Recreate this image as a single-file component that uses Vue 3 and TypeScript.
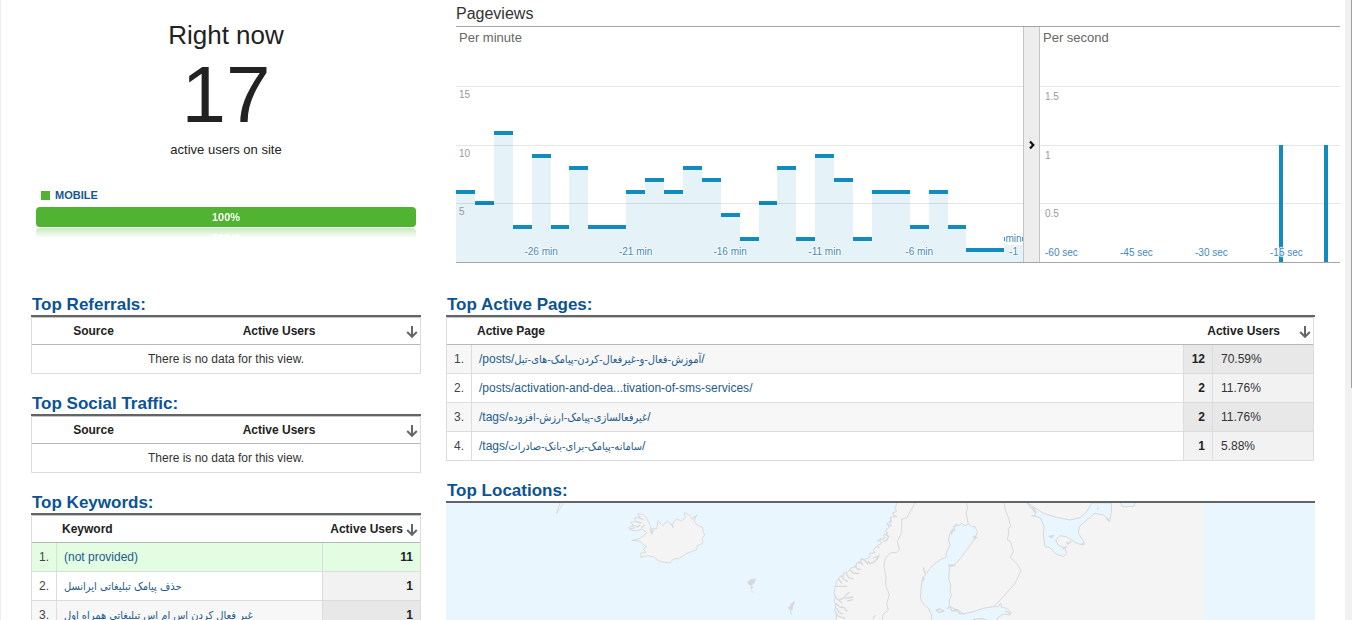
<script setup lang="ts">
interface Column {
  value: number
  label?: string
}

interface PageRow {
  prefix: string
  slug: string
  rtl: boolean
  users: number
  share: string
}

interface KeywordRow {
  text: string
  rtl: boolean
  users: number
}

const minuteValues: number[] = [
  6, 5, 11, 3, 9, 3, 8, 3, 3, 6, 7, 6, 8, 7, 4, 2, 5, 8, 2, 9, 7, 2, 6, 6, 3, 6, 3, 1, 1, 2,
]
const minuteLabels: Record<number, string> = {
  4: '-26 min',
  9: '-21 min',
  14: '-16 min',
  19: '-11 min',
  24: '-6 min',
}
const minutes: Column[] = minuteValues.map((value, i) => ({ value, label: minuteLabels[i] }))
const minuteMax = 20

const seconds: number[] = Array.from({ length: 59 }, (_, i) => (i === 47 || i === 56 ? 1 : 0))
const secondMax = 2
const secondLabels = ['-60 sec', '-45 sec', '-30 sec', '-15 sec']

const minuteTicks = ['15', '10', '5']
const secondTicks = ['1.5', '1', '0.5']

const emptyTables = ['Top Referrals:', 'Top Social Traffic:']

const keywords: KeywordRow[] = [
  { text: '(not provided)', rtl: false, users: 11 },
  { text: 'حذف پیامک تبلیغاتی ایرانسل', rtl: true, users: 1 },
  { text: 'غیر فعال کردن اس ام اس تبلیغاتی همراه اول', rtl: true, users: 1 },
]

const pages: PageRow[] = [
  { prefix: '/posts/', slug: 'آموزش-فعال-و-غیرفعال-کردن-پیامک-های-تبل', rtl: true, users: 12, share: '70.59%' },
  { prefix: '/posts/', slug: 'activation-and-dea...tivation-of-sms-services', rtl: false, users: 2, share: '11.76%' },
  { prefix: '/tags/', slug: 'غیرفعالسازی-پیامک-ارزش-افزوده', rtl: true, users: 2, share: '11.76%' },
  { prefix: '/tags/', slug: 'سامانه-پیامک-برای-بانک-صادرات', rtl: true, users: 1, share: '5.88%' },
]
</script>

<template>
  <div class="page">
    <main class="main">
      <section class="top">
        <div class="now">
          <h1 class="now-title">Right now</h1>
          <div class="now-count">17</div>
          <div class="now-caption">active users on site</div>
          <div class="legend"><span class="swatch"></span>MOBILE</div>
          <div class="share">100%</div>
        </div>

        <div class="views">
          <h2 class="views-title">Pageviews</h2>
          <div class="charts">
            <div class="chart">
              <div class="chart-name">Per minute</div>
              <div class="bars">
                <div v-for="(m, i) in minutes" :key="i" class="col">
                  <div class="step" :style="{ height: (m.value / minuteMax) * 100 + '%' }"></div>
                  <span v-if="m.label" class="col-label">{{ m.label }}</span>
                </div>
                <span class="last-label"><span class="last-unit">min</span><span>-1</span></span>
              </div>
              <div class="grid-lines">
                <div class="band"></div>
                <div v-for="t in minuteTicks" :key="t" class="band line"><span class="tick">{{ t }}</span></div>
              </div>
            </div>
            <button class="splitter" type="button" aria-label="Collapse per second chart">
              <svg width="6" height="10" viewBox="0 0 6 10">
                <path d="M1 1.5 L4.3 5 L1 8.5" fill="none" stroke="#111" stroke-width="2.2" />
              </svg>
            </button>
            <div class="chart">
              <div class="chart-name">Per second</div>
              <div class="grid-lines">
                <div class="band"></div>
                <div v-for="t in secondTicks" :key="t" class="band line"><span class="tick tick-low">{{ t }}</span></div>
              </div>
              <div class="bars">
                <div v-for="(s, i) in seconds" :key="i" class="col">
                  <div v-if="s" class="spike" :style="{ height: (s / secondMax) * 100 + '%' }"></div>
                </div>
              </div>
              <div class="sec-labels">
                <span v-for="l in secondLabels" :key="l">{{ l }}</span>
              </div>
            </div>
          </div>
        </div>
      </section>

      <section class="bottom">
        <div class="side">
          <div v-for="title in emptyTables" :key="title" class="block">
            <h2 class="block-title">{{ title }}</h2>
            <table class="data">
              <colgroup><col class="w-source" /><col /><col class="w-arrow" /></colgroup>
              <thead>
                <tr>
                  <th class="center">Source</th>
                  <th class="center">Active Users</th>
                  <th class="sort">
                    <button type="button" aria-label="Sort by active users">
                      <svg width="12" height="14" viewBox="0 0 12 14">
                        <path d="M6 1V11.5M1.2 7L6 11.8L10.8 7" fill="none" stroke="#666" stroke-width="2" />
                      </svg>
                    </button>
                  </th>
                </tr>
              </thead>
              <tbody>
                <tr><td class="empty" colspan="3">There is no data for this view.</td></tr>
              </tbody>
            </table>
          </div>

          <div class="block">
            <h2 class="block-title">Top Keywords:</h2>
            <table class="data">
              <colgroup><col class="w-index" /><col /><col class="w-users" /><col class="w-arrow" /></colgroup>
              <thead>
                <tr>
                  <th class="name" colspan="2">Keyword</th>
                  <th class="tight">Active Users</th>
                  <th class="sort">
                    <button type="button" aria-label="Sort by active users">
                      <svg width="12" height="14" viewBox="0 0 12 14">
                        <path d="M6 1V11.5M1.2 7L6 11.8L10.8 7" fill="none" stroke="#666" stroke-width="2" />
                      </svg>
                    </button>
                  </th>
                </tr>
              </thead>
              <tbody>
                <tr v-for="(k, i) in keywords" :key="i" :class="{ changed: i === 0 }">
                  <td class="index">{{ i + 1 }}.</td>
                  <td class="item"><a href="#" :class="{ fa: k.rtl }">{{ k.text }}</a></td>
                  <td class="count" colspan="2">{{ k.users }}</td>
                </tr>
              </tbody>
            </table>
          </div>
        </div>

        <div class="wide">
          <div class="block">
            <h2 class="block-title">Top Active Pages:</h2>
            <table class="data inset">
              <colgroup>
                <col class="w-index" /><col /><col class="w-count" /><col class="w-share" /><col class="w-arrow" />
              </colgroup>
              <thead>
                <tr>
                  <th class="name" colspan="2">Active Page</th>
                  <th class="right" colspan="2">Active Users</th>
                  <th class="sort">
                    <button type="button" aria-label="Sort by active users">
                      <svg width="12" height="14" viewBox="0 0 12 14">
                        <path d="M6 1V11.5M1.2 7L6 11.8L10.8 7" fill="none" stroke="#666" stroke-width="2" />
                      </svg>
                    </button>
                  </th>
                </tr>
              </thead>
              <tbody>
                <tr v-for="(p, i) in pages" :key="i">
                  <td class="index">{{ i + 1 }}.</td>
                  <td class="item">
                    <a href="#">{{ p.prefix }}<span :class="{ fa: p.rtl }">{{ p.slug }}</span>/</a>
                  </td>
                  <td class="count">{{ p.users }}</td>
                  <td class="pct" colspan="2">{{ p.share }}</td>
                </tr>
              </tbody>
            </table>
          </div>

          <div class="block">
            <h2 class="block-title">Top Locations:</h2>
            <svg class="map" viewBox="18 84 2607 600" role="img" aria-label="Map of top locations">
              <rect x="18" y="84" width="2607" height="600" fill="#e9f6fe" />
              <path
                class="land"
                d="M1371 84L1365 100L1370 110L1358 113L1365 125L1350 127L1355 140L1340 145L1348 157L1336 165L1343 175L1330 180L1335 190L1318 195L1325 205L1310 213L1300 225L1305 233L1290 235L1290 247L1275 253L1262 253L1265 265L1250 263L1248 275L1232 280L1225 290L1210 295L1212 303L1198 307L1190 320L1185 337L1182 355L1186 367L1182 380L1188 393L1184 405L1190 420L1188 435L1196 520L1230 600L1260 684H2292V84Z"
              />
              <path
                class="coast"
                d="M1371 84L1365 100L1370 110L1358 113L1365 125L1350 127L1355 140L1340 145L1348 157L1336 165L1343 175L1330 180L1335 190L1318 195L1325 205L1310 213L1300 225L1305 233L1290 235L1290 247L1275 253L1262 253L1265 265L1250 263L1248 275L1232 280L1225 290L1210 295L1212 303L1198 307L1190 320L1185 337L1182 355L1186 367L1182 380L1188 393L1184 405L1190 420L1188 435L1196 520"
              />
              <path
                class="fjord"
                d="M1360 120L1372 126M1344 150L1356 152M1352 130L1350 146M1337 178L1346 184L1340 196L1330 200M1312 200L1324 190M1308 215L1318 218M1318 238L1312 252L1300 262L1290 266L1284 258M1316 244L1300 248M1262 250L1276 258L1284 268M1256 258L1270 270M1244 270L1252 282L1262 284M1230 284L1240 294L1258 296M1218 294L1226 308L1240 312M1204 300L1212 314L1224 320M1196 312L1206 326M1186 334L1222 334M1184 362L1196 376L1212 368L1222 356L1228 352M1196 376L1206 384M1214 370L1240 366M1222 378L1238 374M1186 384L1200 396L1212 398L1222 410M1188 398L1198 412L1208 418M1186 412L1196 424L1216 430M1298 432L1306 420"
              />
              <path
                class="border"
                d="M1425 84L1405 120L1402 127L1385 133V173L1372 200L1378 225L1370 233L1352 233L1336 250L1332 275L1338 305L1337 330L1348 360L1340 385L1345 405L1328 420V470M1580 84L1583 100L1578 115L1585 147M1692 84L1696 105L1706 130L1712 155L1705 160L1706 175L1702 194L1712 200L1720 230L1711 248L1730 265L1743 287L1725 325L1690 365L1662 394"
              />
              <path
                class="water"
                d="M1550 147L1558 152L1565 145L1575 152L1585 147L1595 155L1605 155L1612 170L1608 183L1602 193L1598 200L1580 225L1565 245L1548 265L1535 275L1528 273L1528 290L1526 310L1532 330L1530 350L1534 362L1528 375V393L1540 400L1555 405L1570 417L1600 410L1630 400L1660 395L1675 395L1682 384L1685 397L1700 400L1714 413L1710 420L1690 417L1675 427L1670 435L1640 500L1650 600L1660 684H1500L1490 560L1475 435V420L1465 400L1448 385L1441 370L1443 345L1445 320L1455 300L1470 280L1485 265L1500 255L1520 245L1518 235L1530 210L1525 195L1530 175L1545 165L1540 155Z"
              />
              <path
                class="fjord"
                d="M1450 278L1456 298M1446 306L1452 312L1448 320M1532 170L1540 162L1534 178M1542 155L1552 150M1598 186L1612 188M1606 182L1604 194M1524 270L1546 272M1488 405L1500 402L1512 408L1498 412ZM1520 400L1530 396L1536 408L1550 406L1560 416L1574 416M1544 402L1556 410M1696 408L1712 416M1600 434L1624 430L1640 436"
              />
              <path
                class="water"
                d="M1762 84L1780 95L1810 115L1850 127L1890 135L1920 128L1940 110L1955 84H2015L2014 112L2008 140L2003 130L1990 120L1965 115L1940 135L1918 155L1915 175L1932 200L1930 210L1910 205L1895 195L1880 185L1860 182L1847 195L1855 210L1875 220L1880 235L1870 245L1845 235L1830 218L1815 215L1810 180L1812 155L1802 130L1782 122L1788 110L1774 100Z"
              />
              <path
                class="fjord"
                d="M1772 96L1786 104M1778 106L1790 112M1774 122L1788 124M1826 184L1842 182M1830 188L1838 186M1880 200L1884 208L1894 198M1922 208L1934 206M1972 98L1976 102M1868 222L1880 214M1998 130L2008 138"
              />
              <path class="water" d="M2042 84L2048 96L2082 93L2085 84" />
              <path
                class="island"
                d="M570 165L565 158L580 152L572 142L588 138L583 128L600 126L592 117L610 118L620 130L626 142L632 155L630 172L636 176L642 160L650 162L654 137L668 152L682 138L694 150L710 132L724 138L736 128L732 113L748 120L756 132L768 124L762 138L772 150L788 158L790 170L794 180L786 190L788 205L772 212L770 224L740 235L718 250L700 252L690 264L660 260L640 245L622 242L602 247V235L618 232L610 222L620 215L608 208L600 198L575 197L600 190L612 182L620 172L605 162L590 168Z"
              />
              <path
                class="fjord"
                d="M576 150L592 156L600 150M588 140L604 144M596 128L610 134M570 162L584 158M604 158L614 150M694 146L700 158M636 160L636 178M756 132L772 120"
              />
              <path
                class="speck"
                d="M924 322L932 314L946 312L942 324L934 330L926 328ZM934 332L938 338L934 342ZM934 346L938 352M1044 398L1052 396L1054 386L1064 380L1058 394L1056 406L1050 402ZM1050 406L1054 418"
              />
              <path class="island" d="M370 84L360 100L350 115L356 96L360 84" />
            </svg>
          </div>
        </div>
      </section>
    </main>
    <div class="scroll-track"><div class="scroll-thumb"></div></div>
  </div>
</template>

<style>
body {
  margin: 0;
  background: #fff;
}
</style>

<style scoped>
.page {
  display: flex;
  height: 100vh;
  overflow: hidden;
  box-sizing: border-box;
  border-left: 1px solid #efefef;
  font-family: "Liberation Sans", Arial, "DejaVu Sans", sans-serif;
  font-size: 12px;
  color: #222;
}
.main {
  flex: 1;
  min-width: 0;
}
.scroll-track {
  width: 7px;
  background: #f1f1f1;
  display: flex;
  justify-content: flex-end;
}
.scroll-thumb {
  width: 1px;
  height: 388px;
  background: #a0a0a0;
}
h1,
h2 {
  margin: 0;
  font-weight: normal;
}

/* Overview */
.top {
  display: grid;
  grid-template-columns: 380px 1fr;
  gap: 40px;
  padding: 0 5px 29px 35px;
}
.now {
  padding-top: 19px;
  text-align: center;
}
.now-title {
  font-size: 26px;
  line-height: 32px;
}
.now-count {
  margin-top: 4px;
  font-size: 80px;
  line-height: 80px;
}
.now-caption {
  margin-top: 7px;
  font-size: 13px;
  line-height: 16px;
}
.legend {
  display: flex;
  align-items: center;
  gap: 5px;
  margin: 29px 0 4px;
  padding-left: 5px;
  font-size: 11px;
  font-weight: bold;
  line-height: 16px;
  color: #15588f;
}
.swatch {
  width: 9px;
  height: 9px;
  background: #50b432;
}
.share {
  border-radius: 4px;
  background: #50b432;
  color: #fff;
  font-size: 11px;
  font-weight: bold;
  line-height: 20px;
  -webkit-box-reflect: below 1px linear-gradient(transparent 50%, rgba(0, 0, 0, 0.3));
}

/* Charts */
.views-title {
  padding-top: 4px;
  font-size: 16px;
  line-height: 20px;
  padding-bottom: 2px;
  border-bottom: 1px solid #a5a5a8;
  color: #333;
}
.charts {
  display: grid;
  grid-template-columns: 567fr 17px 300fr;
  height: 235px;
  border-bottom: 1px solid #a5a5a8;
}
.chart {
  display: grid;
  min-width: 0;
}
.chart > * {
  grid-area: 1 / 1;
  min-width: 0;
}
.chart-name {
  padding: 2px 3px;
  font-size: 13px;
  line-height: 18px;
  color: #666;
}
.bars {
  position: relative;
  display: flex;
}
.col {
  position: relative;
  flex: 1;
  min-width: 0;
  display: flex;
  align-items: flex-end;
}
.step {
  position: relative;
  flex: 1;
  background: #e5f2f8;
}
.step::before {
  content: "";
  position: absolute;
  top: -2px;
  left: 0;
  right: 0;
  height: 4px;
  background: #128cbf;
}
.spike {
  flex: none;
  width: 4px;
  background: #128cbf;
}
.col-label,
.last-label,
.sec-labels {
  font-size: 10px;
  line-height: 12px;
  color: #4389b8;
  white-space: nowrap;
  text-shadow: 0 0 2px #fff, 1px 0 1px #fff, -1px 0 1px #fff, 0 1px 1px #fff, 0 -1px 1px #fff;
}
.col-label {
  position: absolute;
  z-index: 1;
  left: 50%;
  bottom: 4px;
  transform: translateX(-50%);
}
.last-label {
  position: absolute;
  right: 0;
  bottom: 4px;
  width: 19px;
  display: flex;
  flex-direction: column;
  align-items: center;
}
.last-unit {
  align-self: center;
  width: 17px;
  margin-bottom: 1px;
  background: #fff;
  text-align: center;
}
.grid-lines {
  position: relative;
  display: grid;
  grid-template-rows: repeat(4, 1fr);
}
.band.line {
  border-top: 1px solid rgba(0, 0, 0, 0.1);
}
.tick {
  display: block;
  padding: 2px 3px;
  font-size: 10px;
  line-height: 12px;
  color: #999;
}
.tick-low {
  padding: 4px 5px;
}
.sec-labels {
  position: relative;
  display: grid;
  grid-template-columns: repeat(4, 1fr);
  align-items: end;
  padding: 0 0 3px 5px;
  margin-right: -5px;
}
.splitter {
  display: flex;
  align-items: center;
  justify-content: center;
  padding: 0;
  border: solid #c4c4c4;
  border-width: 0 1px;
  background: #ededed;
}

/* Tables */
.bottom {
  display: grid;
  grid-template-columns: 390px 1fr;
  gap: 25px;
  padding: 0 30px;
}
.side,
.wide {
  display: flex;
  flex-direction: column;
  gap: 17px;
  min-width: 0;
}
.block-title {
  padding: 2px 1px 0;
  border-bottom: 2px solid #636466;
  font-size: 17px;
  font-weight: bold;
  line-height: 21px;
  color: #0b5394;
}
.data {
  width: 100%;
  table-layout: fixed;
  border-collapse: separate;
  border-spacing: 0;
  border: solid #dcdcdc;
  border-width: 0 1px;
}
.inset {
  width: calc(100% - 1px);
}
.w-source { width: 123px; }
.w-arrow { width: 17px; }
.w-index { width: 25px; }
.w-users { width: 81px; }
.w-count { width: 29px; }
.w-share { width: 84px; }
th {
  box-sizing: border-box;
  height: 28px;
  padding: 0;
  border-top: 1px solid #c4c4c4;
  border-bottom: 1px solid #b8b8b8;
  line-height: 16px;
  white-space: nowrap;
}
.center {
  text-align: center;
}
.name {
  padding-left: 30px;
  text-align: left;
}
.tight {
  text-align: right;
}
.right {
  padding-right: 16px;
  text-align: right;
}
.sort button {
  display: block;
  padding: 0;
  margin: 1px 0 0 3px;
  border: 0;
  background: none;
}
.sort svg {
  display: block;
}
td {
  box-sizing: border-box;
  height: 29px;
  padding: 0;
  border-bottom: 1px solid #dcdcdc;
  line-height: 16px;
  white-space: nowrap;
}
.empty {
  text-align: center;
  color: #333;
}
.index {
  padding-right: 7px;
  border-right: 1px solid #dcdcdc;
  text-align: right;
  color: #444;
}
.item {
  padding-left: 7px;
  overflow: hidden;
}
.item a {
  color: #235c8c;
  text-decoration: none;
}
.fa {
  font-family: "DejaVu Sans Condensed", "DejaVu Sans", sans-serif;
  font-size: 11px;
}
.count {
  padding-right: 7px;
  border-left: 1px solid #dcdcdc;
  background: #f2f2f2;
  text-align: right;
  font-weight: bold;
}
.pct {
  padding-left: 8px;
  border-left: 1px solid #dcdcdc;
  background: #f2f2f2;
  color: #333;
}
tbody tr:nth-child(odd) .index,
tbody tr:nth-child(odd) .item {
  background: #f7f7f7;
}
tbody tr:nth-child(odd) .count,
tbody tr:nth-child(odd) .pct {
  background: #e8e8e8;
}
tbody tr.changed > td.index,
tbody tr.changed > td.item,
tbody tr.changed > td.count {
  background: #e2fde2;
}

/* Map */
.map {
  display: block;
  width: 100%;
  height: auto;
}
.land {
  fill: #f4f4f4;
}
.coast,
.fjord,
.border {
  fill: none;
  stroke: #d5d9dc;
  stroke-width: 3;
  stroke-linejoin: round;
}
.fjord {
  stroke-width: 4;
}
.water {
  fill: #e9f6fe;
  stroke: #d5d9dc;
  stroke-width: 3;
}
.island {
  fill: #f4f4f4;
  stroke: #d9dcde;
  stroke-width: 3;
}
.speck {
  fill: #d5d9dc;
  stroke: #d5d9dc;
  stroke-width: 3;
}
</style>
